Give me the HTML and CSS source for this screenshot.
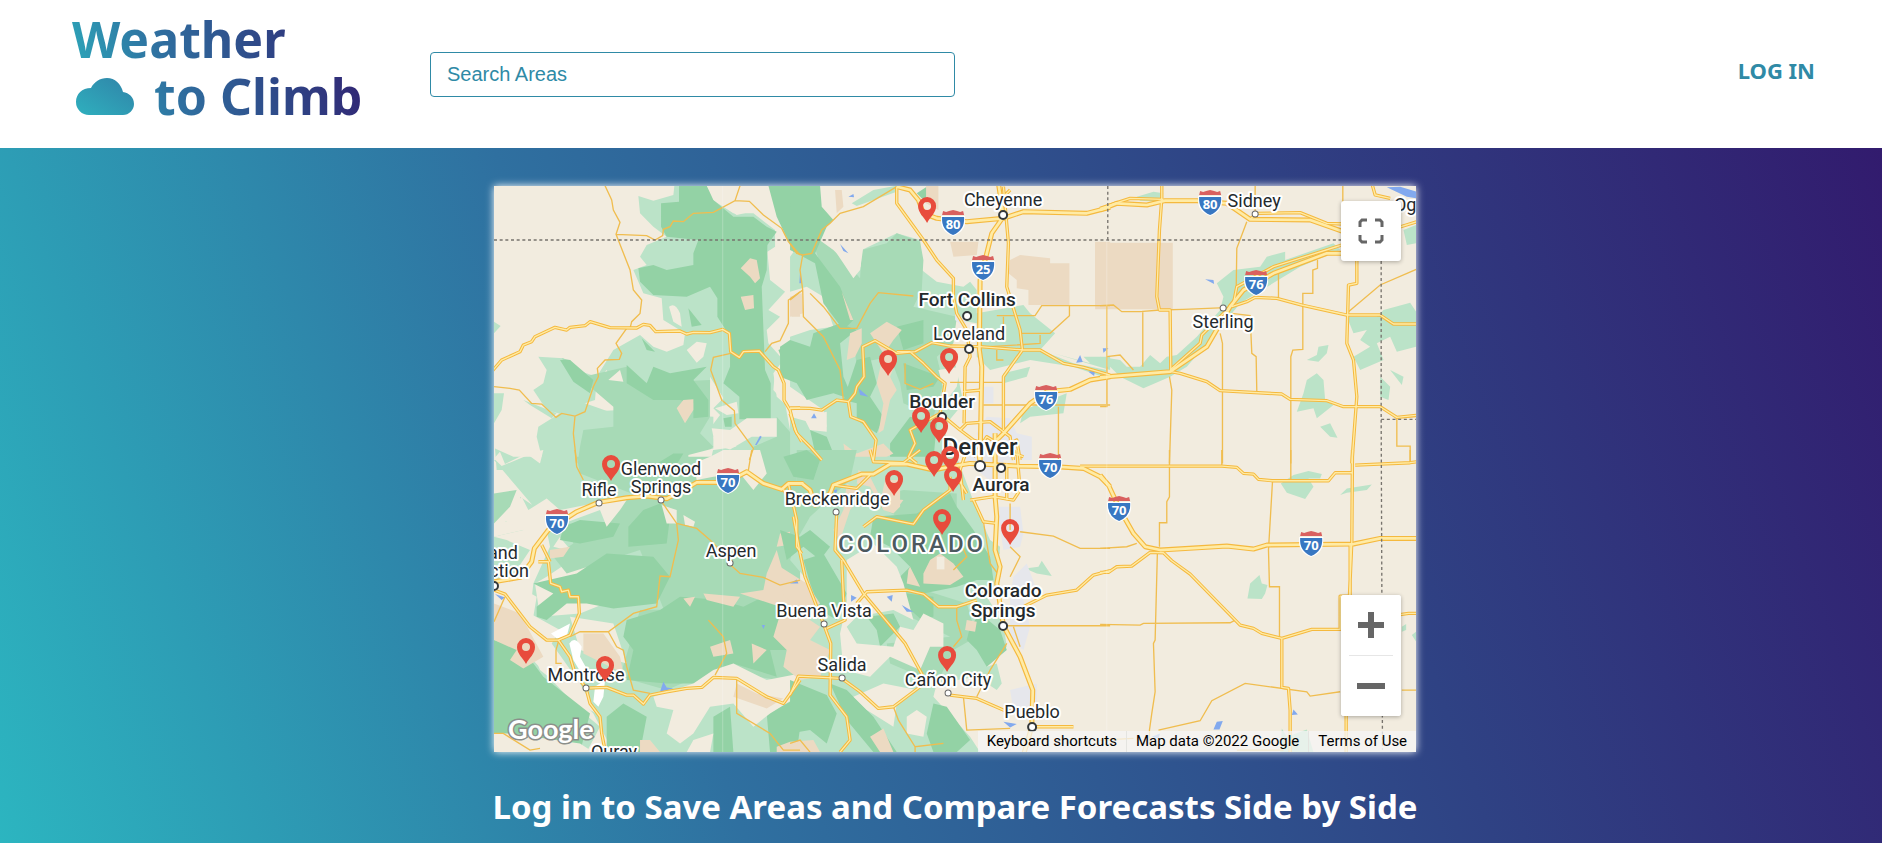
FILE: index.html
```html
<!DOCTYPE html>
<html lang="en">
<head>
<meta charset="utf-8">
<meta name="viewport" content="width=device-width, initial-scale=1">
<title>Weather to Climb</title>
<link rel="stylesheet" href="styles.css">
</head>
<body>
<header class="header">
  <a class="logo" href="#">
    <span class="logo-line">Weather</span>
    <span class="logo-row">
      <svg class="cloud" viewBox="0 0 58 37" aria-hidden="true">
        <defs><linearGradient id="cloudFill" x1="0" y1="1" x2="1" y2="0"><stop offset="0" stop-color="#2fb0be"/><stop offset="1" stop-color="#3083a8"/></linearGradient></defs>
        <path fill="url(#cloudFill)" d="M13 37A13 13 0 0 1 0 24C0 16 6 10 15 10C18 4 24 0 31 0C39 0 45 6 47 14C53 15 58 19 58 26C58 32 53 37 47 37Z"/>
      </svg>
      <span class="logo-line">to Climb</span>
    </span>
  </a>
  <input class="search" type="search" placeholder="Search Areas" aria-label="Search Areas">
  <a class="login" href="#">LOG IN</a>
</header>
<main class="main">
  <section class="map" aria-label="Map of climbing areas">
    <svg class="map-canvas" viewBox="0 0 922 566" preserveAspectRatio="xMidYMid slice">
      <defs>
        <g id="highways">
          <path transform="translate(-42 792)" d="M42,395L120,382L155,335L163,295L205,240L290,185L355,157L440,143L500,138L560,146L620,115L650,97L740,97L800,65L850,100L905,118L925,100L970,100"/>
          <path transform="translate(888 792)" d="M0,100L35,100L60,120L75,165L120,130L130,105L215,72L250,72L300,42L350,42L430,60L480,50L540,40L680,48L800,50L880,55L930,80L960,110M615,-50L615,140L620,200L615,300L630,350L620,400L640,527L690,620L728,720L725,830L700,915"/>
          <path transform="translate(1818 792)" d="M0,75L25,105L60,180L100,250L135,290L180,300L380,288L460,297L500,285L760,282L840,265L960,265"/>
          <path transform="translate(888 -48)" d="M320,50L360,60L385,90L400,130L440,145L530,155L640,145L700,125L890,130L960,112M625,40L640,140L605,190L590,250L570,330L568,540L575,590L570,880M620,810L640,790L720,700L770,665L840,658L900,630L960,620"/>
          <path transform="translate(1818 -48)" d="M0,120L50,100L140,105L195,92L290,92L380,100L450,148L630,150L730,185M0,622L210,605L320,530L390,410L430,360L520,310L680,250L735,250"/>
        </g>
        <g id="roads">
          <path transform="translate(-42 -48)" d="M35,605L65,570L120,545L130,525L155,515L165,500L225,472L260,480L270,472L315,467L330,455L390,473L470,474L490,463L510,466L527,485L600,483L620,492L640,487L690,488L728,478L748,490L752,545L778,562L790,545L838,543L880,590L895,600L912,640L912,690L930,720L945,780L965,815M930,716L960,714"/>
          <path transform="translate(888 -48)" d="M0,714L60,715L95,720L140,690L175,695L195,670L200,650L222,620L218,530L255,512L320,550L375,545L425,518L480,528L570,530L700,540L750,540L820,580L880,592L960,615M320,50L320,100L400,210L440,270L490,325L490,380L500,430L530,480L540,560L525,590L522,760M640,50L655,220L650,350L690,480L697,540L640,620L640,780M660,60L640,80M320,545L360,545L400,580L440,620L465,640L450,730L510,780L530,760L600,755L660,800L670,870M175,695L182,740L220,755L258,810L250,870M0,730L20,790L60,830L95,870M510,780L550,810L700,860M520,665L575,660M450,730L360,780L375,820L355,860L380,880M550,860L590,800L640,830L680,810L690,870"/>
          <path transform="translate(1818 -48)" d="M185,40L185,85L178,180L170,380L178,420L210,420L212,605M0,115L60,95L90,85L190,88M450,148L470,130L600,128L680,160L730,162M212,605L240,610L320,635L360,662L545,672L570,688L680,692L730,710L840,710L890,742L960,735M395,410L440,395L465,382L530,385L605,405L740,435L840,435L880,462L960,462M770,270L770,340L745,345L740,520L760,570L770,680L755,880M815,40L825,75L870,85M870,180L960,152M210,600L300,520L305,495L400,400L410,350L520,290L725,225"/>
          <path transform="translate(-42 792)" d="M42,420L75,432L150,530L200,570L235,570L270,620L285,670L318,714L330,760L360,800L365,850L375,900M175,335L205,335L212,400L240,410L245,425L265,420L270,440L295,440L298,490L270,555L235,570M185,285L210,335M318,714L380,712L440,735L460,735L490,762L510,735L560,725L620,715L665,712L700,682L770,685L860,740L910,760L960,690M925,100L950,210L950,290L965,310M910,118L935,160"/>
          <path transform="translate(888 792)" d="M10,200L30,310L45,380L100,520L122,580L120,735L170,800L180,870L150,906M140,185L135,300L160,330L220,430L345,580L400,680L390,710L310,770L265,775L210,725L155,685L25,678L0,735M130,105L200,115L240,75M155,330L160,440L165,510L110,535M200,460L230,425L350,420L400,432L445,470L500,470L560,450M220,230L260,200L370,222L400,180L480,120L480,80M480,735L560,745L640,780L725,790M540,150L610,140L670,150L690,120L680,0M530,0L510,60L520,150M550,150L580,215L620,220M725,830L850,830M680,480L700,470L770,435L860,420L910,375L960,362M500,80L530,130M240,0L250,35L340,38L390,0M560,0L570,40M650,40L650,150"/>
          <path transform="translate(1818 792)" d="M-60,48L365,48L410,52L430,70L460,72L475,88L515,92L685,92L705,68L755,68M757,0L755,275L748,435M765,45L930,38L960,34M0,367L25,367L50,350L95,348L150,307L190,308L215,332L270,372L420,525L460,535L485,550L545,565L635,538L720,538L720,438L750,438L750,280M545,565L545,712L565,715L570,780L570,906M738,798L738,906M890,495L925,490L960,490"/>
        </g>
        <path id="pin" fill="#e84b3c" fill-rule="evenodd" d="M0 0C-3-6-9-10-9-17A9 9 0 0 1 9-17C9-10 3-6 0 0ZM0-21A4 4 0 1 0 0-13A4 4 0 1 0 0-21Z"/>
        <g id="shield"><path fill="#fff" d="M-12-7H12V0Q11 9 0 13Q-11 9-12 0Z"/><path fill="#d9605f" d="M-10-12L-7-11L-4-12L0-13L4-12L7-11L10-12L11-8H-11Z"/><path fill="#3877c2" d="M-11-6H11Q12 7 0 12Q-12 7-11-6Z"/></g>
      </defs>

      <g transform="scale(.333333)">
        <g transform="translate(-42 -48)">
          <path class="light" d="M475,78L520,92L580,75L583,47L680,47L690,85L760,130L820,130L885,180L885,230L862,245L870,330L915,365L865,420L900,440L860,480L865,520L910,570L880,610L890,680L930,715L960,800L960,880L620,880L640,850L700,840L770,830L700,800L690,775L720,735L700,715L730,685L720,640L690,590L690,640L480,650L420,640L395,640L380,600L350,630L345,690L315,700L400,730L365,755L310,725L270,740L200,720L160,660L190,640L200,600L175,560L250,565L290,600L350,620L400,540L480,495L520,530L560,545L610,525L615,490L550,450L545,385L490,370L460,300L500,285L480,260L500,225L560,200L520,170L480,130Z"/>
          <path class="light" d="M620,500L740,480L760,560L740,700L690,620L620,550Z"/>
          <path class="light" d="M175,770L240,730L420,720L700,740L700,835L620,900L50,900L45,835L100,860L185,860L170,800ZM42,670L72,670L65,720L42,760ZM42,455L62,468L42,490ZM130,690L230,730L215,745L150,705Z"/>
          <path class="mid" d="M300,830L310,780L400,770L400,710L330,650L280,610L245,565L270,570L310,620L440,590L470,640L690,630L690,740L660,790L700,830L620,900L290,900ZM820,830L890,800L890,740L960,820L960,880L820,880Z"/>
          <path class="dark" d="M543,100L597,95L597,47L680,47L700,90L760,140L820,140L860,170L890,185L862,225L860,300L845,350L855,600L872,640L872,748L778,748L778,680L730,640L750,590L750,500L712,440L712,385L690,350L620,380L520,375L480,335L475,295L520,285L560,300L640,285L640,250L655,210L560,200L543,170ZM865,47L960,47L960,250L940,245L890,140ZM485,505L525,545L500,540ZM440,585L500,640L520,590L570,610L680,590L640,630L685,690L685,740L640,745L640,700L600,690L520,690L440,640ZM625,415L665,465L635,470ZM895,540L960,510L960,585L910,580ZM730,745L755,740L755,770L735,770ZM240,570L270,570L340,630L330,670L280,635Z"/>
          <path class="base" d="M680,47H785L800,90L835,120L770,135L710,95ZM620,540L650,515L680,520L670,560L650,578ZM567,410Q585,395 600,430L605,470L580,455ZM705,715L770,695L775,730L740,735ZM695,775L750,780L800,745L890,745L890,800L815,800L750,838L705,825ZM420,600L430,635L385,630ZM880,470L905,440L935,490L900,495ZM625,855L700,835L690,880L625,880ZM885,600L930,630L955,700L930,780L915,700L880,660Z"/>
          <path class="tan" d="M782,295L810,265L830,270L840,325L825,340L810,320ZM782,380L820,375L822,415L795,420ZM590,715L610,690L640,688L640,720L615,760ZM935,395L960,380L960,440L935,440Z"/>
          <path class="water" d="M825,825L840,797L845,800L830,825Z"/>
        </g>
        <g transform="translate(888 -48)">
          <path class="light" d="M185,100L250,60L320,47L320,65L200,108ZM0,260L60,180L95,220L180,290L215,290L215,240L320,190L390,210L395,300L440,335L520,350L540,335L560,360L560,430L700,405L720,430L795,490L750,540L850,580L950,600L950,625L850,590L720,570L600,600L560,560L560,460L500,450L480,520L500,600L520,700L470,760L460,880L0,880L0,740L110,770L100,720L0,650L0,500L60,480L130,470L100,380L50,350L0,365ZM640,610L720,590L710,620L640,640ZM700,720L830,670L820,730L720,740L690,760ZM790,550L900,580L880,560L960,560L960,600Z"/>
          <path class="mid" d="M60,190L130,240L180,290L210,325L215,240L290,220L320,190L390,215L400,270L395,360L370,410L500,440L490,520L440,560L460,640L430,740L340,700L330,640L300,560L200,580L180,480L130,400Z"/>
          <path class="dark" d="M0,47L90,47L95,110L130,150L110,170L75,250L150,350L190,450L160,480L100,400L75,280L20,250L0,240ZM380,70L410,50L410,100ZM70,490L150,460L200,480L150,520L160,620L190,690L130,670L50,690L20,640L-30,620L-30,530L0,510L60,530ZM340,580L450,620L430,650L350,660ZM200,570L240,560L260,640L240,680L280,740L260,790L200,750L200,700L160,690ZM320,470L400,450L400,520L340,540ZM360,740L440,760L430,870L300,870L300,820ZM60,780L110,800L130,850L80,870Z"/>
          <path class="base" d="M130,210L180,240L220,230L210,300L190,325L160,280L140,250ZM445,600L510,590L500,650L470,690ZM40,740L110,725L110,785L60,780Z"/>
          <path class="tan" d="M135,60L155,60L160,110L140,130ZM408,47L445,47L445,120L408,100ZM480,215L565,215L560,255L490,260ZM660,270L690,255L780,265L780,280L838,280L838,405L715,405L715,360L680,355L680,330L655,310ZM915,215L960,215L960,405L915,405ZM180,490L215,475L215,520L195,560L170,570ZM240,490L290,455L335,480L310,510L290,540L320,570L300,620L320,660L300,690L280,780L265,790L280,700L260,640L280,550ZM155,365L190,450L180,450ZM0,380L35,370L40,430L0,440ZM160,820L200,850L280,820L310,850L250,880L170,880ZM590,800L610,810L600,830Z"/>
          <path class="urban" d="M495,430L530,450L520,470L495,450ZM580,650L610,650L610,700L580,700ZM590,740L660,745L680,790L725,800L725,870L590,870L560,790Z"/>
          <path class="water" d="M150,222L175,250L160,243ZM175,80L190,72L192,82ZM30,305L35,340L28,340ZM205,655L235,680L210,675ZM63,745L72,730L80,745ZM858,578L870,555L878,576ZM895,605L915,600L912,618ZM938,535L955,535L940,548Z"/>
        </g>
        <g transform="translate(1818 -48)">
          <path class="light" d="M0,560L60,570L80,590L120,590L150,555L180,580L200,560L230,555L290,500L360,420L370,380L350,340L400,300L480,290L500,260L555,245L555,270L700,220L720,240L600,290L420,400L330,510L260,590L210,620L130,655L60,620ZM110,80L160,65L190,70L170,95L120,92ZM620,570L650,555L655,530L685,525L680,550L655,575ZM590,725L610,670L620,630L650,610L670,630L675,690L700,705L650,745L640,715ZM660,770L690,760L712,803L690,800ZM740,440L830,440L850,420L930,398L948,425L948,530L890,545L870,500L830,520L850,570L780,600L760,560L810,530L780,510L800,480L760,490ZM870,600L910,620L905,645ZM840,620L870,650L865,690L840,680ZM910,180L948,165L948,220L920,225Z"/>
          <path class="tan" d="M-15,218H218V418H-15Z"/>
          <path class="water" d="M860,52L900,50L948,65V85L920,80ZM315,328L340,330L342,342Z"/>
        </g>
        <g transform="translate(-42 792)">
          <path class="light" d="M42,30L70,30L130,30H960V906H400L340,790L240,680L200,560L160,500L170,440L80,390L42,390V260L130,240L120,210L75,215L130,180L120,140L180,180L220,150L290,190L260,230L220,290L260,300L300,270L320,300L200,380L165,400L180,500L300,490L400,450ZM42,560L130,600L300,780L360,830L320,906H42Z"/>
          <path class="mid" d="M290,20H960V500H560L480,300L260,370L220,320L280,280L260,220L380,230L400,150L480,140L300,70ZM42,130L110,120L90,170L42,220ZM480,480L960,470V700L700,660L560,720L420,680Z"/>
          <path class="dark" d="M160,400L290,370L380,310L520,320L570,380L530,460L400,475L320,460L260,460L200,510L170,500V470L220,430ZM250,230L300,210L420,220L400,260L300,280L240,270ZM445,230L490,180L540,160L570,200L560,280L445,290ZM440,510L540,480L600,440L720,450L790,470L850,440L960,480V600L870,600L890,680L760,640L660,700L560,700L440,690L460,600L430,560ZM42,570L130,600L190,680L240,720L330,790L300,906L42,860ZM500,60L580,10H610L580,60ZM380,800L430,760L500,800L480,906H380ZM700,800L750,770L760,906H700ZM860,790L960,740V906H870Z"/>
          <path class="base" d="M60,5L75,42L130,15L165,5L190,0L180,40L145,15L65,48L42,25ZM70,210L125,140L145,180L200,145L240,180L340,160L440,150L420,180L380,230L360,180L250,220L200,240L210,290L160,400L150,490L240,540L215,580L300,700L350,790L330,780L180,660L140,560L42,480V400L90,390L150,300L80,270L42,260L130,240ZM545,165L590,180L590,220L560,220ZM610,195L645,215L640,230L615,225ZM520,740L640,700L700,660L760,640L860,690L960,670V735L870,790L820,830L760,760L690,770L640,850L600,880L560,850L580,780L530,770ZM42,850L100,850L160,860L300,880L340,906H42ZM640,870L700,850L690,906H620ZM640,40L690,20L730,0H840L860,70L820,120L780,70L700,80L650,90ZM270,500L400,520L440,640L300,600Z"/>
          <path class="tan" d="M42,460L120,490L190,620L130,655L90,630L110,600L42,570ZM310,550L370,550L420,620L430,670L390,650L310,610ZM670,430L780,440L760,470L680,450ZM780,430L850,420L860,370L890,300L915,390L960,400V500L900,470ZM690,590L750,570L760,610L700,620ZM815,580L860,600L820,640ZM610,445L645,440L630,470ZM210,300L270,290L250,320L210,325ZM900,250L930,245L925,285L890,290ZM480,870L510,870L540,906H480ZM770,700L830,730L910,745L860,775L760,740Z"/>
          <path class="snow" d="M213,550L270,520L260,560L230,565ZM268,580Q285,555 305,590L300,620L325,665L310,680L280,630ZM345,710L375,690L370,740L355,770L340,755Z"/>
          <path class="water" d="M540,725L550,695L560,712L580,715ZM845,525L855,525L850,537ZM935,397L955,388L955,402ZM45,432L75,442L65,450Z"/>
        </g>
        <g transform="translate(888 792)">
          <path class="light" d="M20,20H500L560,180L600,270L630,290L620,400L590,440L640,520L650,590L590,650L620,640L635,700L620,720L560,680L440,700L430,740L540,860L570,906H20L40,760L20,680L50,600L20,500L60,400L0,330L40,200L20,100ZM705,355L745,350L755,332L785,378L740,370ZM580,290L620,275L630,310L600,320Z"/>
          <path class="mid" d="M20,0H200L180,90L60,200L20,270ZM340,400L530,460L560,560L490,600L440,700L300,640L290,580L480,560L360,500ZM230,150L340,120L500,130V190L380,230Z"/>
          <path class="dark" d="M-20,20L50,0L90,30L70,90L10,80ZM250,200L380,190L480,130L500,170L550,240L600,320L610,390L560,390L500,410L400,430L340,420L320,390L360,350L300,290L240,260ZM-30,240L30,260L60,240L120,290L90,330L40,290L-10,330ZM40,330L100,310L170,430L140,510L90,480L60,400ZM350,430L430,440L430,500L390,505L340,460ZM540,530L570,490L630,540L650,600L590,650L560,600L530,570ZM230,500L310,490L330,530L270,590L260,540ZM0,690L110,735L140,790L110,880L60,840L0,850ZM120,700L170,720L250,800L320,906H250L170,810ZM430,760L470,770L540,870L500,906H430L410,850Z"/>
          <path class="base" d="M170,330L250,280L320,350L340,400L370,510L310,480L200,500L170,530L200,580L310,590L330,530L370,540L400,490L460,520L460,590L420,590L390,660L300,620L240,680L160,660L150,550L170,460ZM190,740L280,700L380,720L320,760L310,830L230,780ZM380,780L410,800L400,860L350,850V800Z"/>
          <path class="tan" d="M205,60L240,80L270,140L340,150L310,190L280,180L240,110L200,100ZM170,100L220,130L180,180L150,270L130,240L160,180ZM285,90L330,90L330,170L310,190L270,160ZM420,330L450,310L490,340L520,380L480,405L400,400L400,370ZM370,330L360,350L390,410L350,400L355,360ZM530,510L560,515L555,545L525,540ZM-20,460L30,490L90,530L60,570L120,600L90,680L30,690L-20,650L-10,600L-50,560ZM-30,350L50,400L90,460L60,480L-20,440ZM240,860L280,835L310,906H270ZM-40,890L0,875L70,870L90,906H-40Z"/>
          <path class="base" d="M440,320H463V358H440Z"/>
          <path class="urban" d="M500,0H640V60L610,100L560,60ZM620,170L690,170L700,250L690,290L640,300ZM670,380L710,340L740,420L700,450L720,530L700,600L660,570L660,440ZM660,720L740,700L740,800L670,780Z"/>
          <path class="water" d="M290,440L308,435L305,455ZM335,465L370,485L350,485ZM183,435L200,443L183,455ZM640,815L680,822L660,832ZM0,400L20,388L25,400ZM127,120L142,118L138,130Z"/>
        </g>
        <g transform="translate(1818 792)">
          <path class="light" d="M542,100L580,75L625,63L665,72L660,85L625,85L640,110L615,147L560,128ZM720,135L740,115L815,103L800,120L740,128ZM442,445L450,400L478,375L485,400L502,405L495,430L485,447ZM545,835L560,860L620,838L640,906H540ZM905,530L918,522L918,540L905,545ZM935,555L948,545V575Z"/>
          <path class="water" d="M340,838L350,815L368,813L358,838ZM575,795L580,778L593,793ZM155,860L180,850L175,865Z"/>
        </g>

        <g class="minor">
          <path transform="translate(-42 -48)" d="M375,47L395,90L400,120L420,157L408,193L450,300L460,360L485,390L480,430L455,455L450,475M408,193L500,197L525,210L548,197L550,178L570,170L580,153L610,155L640,130L700,127L765,92L808,94L850,135L905,175L925,215L960,255M780,47L765,92M440,475L408,520L425,550L418,568L375,570L352,595L355,620L340,650L315,725L285,738L245,730L228,742L185,702L155,700L118,660L90,655L42,650M285,738L280,790L290,880M752,550L700,562L692,600L725,690L763,722L765,760L820,835L808,870M855,545L875,520L900,512L925,460L925,390L960,365"/>
          <path transform="translate(888 -48)" d="M320,50L220,110L150,130L120,160L95,180L65,250L38,255L20,250L0,220M38,255L30,300L38,360L0,390M38,360L40,440L100,500L150,600L160,690M60,370L100,410L150,475L200,475L240,400L265,368L370,378M620,437L735,437L755,407L960,407M838,407V437L780,490H690M480,637H640M580,705H960M805,710V870M600,530L750,520V495M640,490V440M620,540V570H640M345,580L345,640L390,658L430,640M950,407V710"/>
          <path transform="translate(1818 -48)" d="M440,155L410,235L408,370M465,47V130M728,47V155M0,407L40,405L65,425L120,425L180,420L250,418L395,412M128,422V590M208,620L215,660L208,880M360,490L367,520V880M395,430L450,437L455,550L468,560L470,665M652,270L652,295L638,300V370H608V538L578,540L572,560V880M535,310V385M745,425L840,345L948,298M0,710H20V590M890,745V828H930V880M20,560L60,555L100,600"/>
          <path transform="translate(-42 792)" d="M285,0L290,50L310,90M545,155L590,220L595,270L570,380L540,378L530,470L460,490L385,545L300,545L270,560M590,220L650,235L690,270L735,315M752,345L780,370L850,382L900,405L960,390M385,545L410,590L430,600L440,650L460,720L510,730M685,510L730,560L740,610L705,675M770,690L770,790L870,850L910,900H960M42,515L75,440M235,575L228,600V640L245,640M42,850L70,850L150,900L180,895M815,0L805,60"/>
          <path transform="translate(888 792)" d="M690,245L790,258L870,295H960M640,527H960M650,580L600,660L560,740M500,470L500,510L515,560L490,590M660,160V240M660,290L690,320L660,380M310,770L325,810L375,890L460,880M520,740L530,840L660,835M375,906V890M670,530L690,590M0,880L30,870L60,906M490,360L530,320L500,250M580,215L600,340L630,380"/>
          <path transform="translate(1818 792)" d="M208,0V140L200,155V218H178V290M172,300L165,570L160,580L165,725L155,790L148,840V880M0,523L120,525L130,520L390,518L405,510M517,95L505,300L508,410H538V560M0,295L80,290L110,280M175,840L300,812L335,752L435,700L620,725L630,738L720,725M905,720H948M572,0V90M365,0V45M930,0V35M0,870L100,865M410,900H550"/>
        </g>
        <use href="#roads" class="case case-road"/>
        <use href="#highways" class="case case-highway"/>
        <use href="#roads" class="core core-road"/>
        <use href="#highways" class="core core-highway"/>
        <path class="border" d="M0,162H2550M1841,0V162M2661,225V700L2665,1690M2661,700H2766"/>
        <path class="seam" d="M686,0V1698M1838,160V1698"/>
      </g>

      <g class="dots">
        <circle cx="509" cy="29" r="4"/><circle cx="473" cy="130" r="4"/><circle cx="475" cy="163" r="4"/><circle cx="448" cy="231" r="4"/><circle cx="486" cy="280" r="5"/><circle cx="507" cy="282" r="4"/><circle cx="509" cy="440" r="4"/><circle cx="538" cy="541" r="4"/><circle cx="0" cy="400" r="4"/>
      </g>
      <g class="dots dots-small">
        <circle cx="761" cy="28" r="3"/><circle cx="729" cy="122" r="3"/><circle cx="105" cy="317" r="3"/><circle cx="167" cy="314" r="3"/><circle cx="236" cy="377" r="3"/><circle cx="92" cy="502" r="3"/><circle cx="342" cy="326" r="3"/><circle cx="330" cy="438" r="3"/><circle cx="348" cy="492" r="3"/><circle cx="454" cy="507" r="3"/>
      </g>
      <g class="routes">
        <use href="#shield" x="459" y="37"/><text x="459" y="43">80</text>
        <use href="#shield" x="489" y="82"/><text x="489" y="88">25</text>
        <use href="#shield" x="552" y="212"/><text x="552" y="218">76</text>
        <use href="#shield" x="716" y="17"/><text x="716" y="23">80</text>
        <use href="#shield" x="762" y="97"/><text x="762" y="103">76</text>
        <use href="#shield" x="556" y="280"/><text x="556" y="286">70</text>
        <use href="#shield" x="625" y="323"/><text x="625" y="329">70</text>
        <use href="#shield" x="817" y="358"/><text x="817" y="364">70</text>
        <use href="#shield" x="234" y="295"/><text x="234" y="301">70</text>
        <use href="#shield" x="63" y="336"/><text x="63" y="342">70</text>
      </g>
      <g class="labels">
        <text x="509" y="20">Cheyenne</text><text x="475" y="154">Loveland</text>
        <text x="760" y="21">Sidney</text><text x="729" y="142">Sterling</text><text x="911" y="25">Og</text>
        <text x="105" y="310">Rifle</text><text x="167" y="289">Glenwood</text><text x="167" y="307">Springs</text>
        <text x="237" y="371">Aspen</text><text x="9" y="373">and</text><text x="15" y="391">ction</text>
        <text x="92" y="495">Montrose</text><text x="120" y="572">Ouray</text>
        <text x="343" y="319">Breckenridge</text><text x="330" y="431">Buena Vista</text>
        <text x="348" y="485">Salida</text><text x="454" y="500">Cañon City</text><text x="538" y="532">Pueblo</text>
        <g class="city"><text x="473" y="120">Fort Collins</text><text x="448" y="222">Boulder</text><text x="507" y="305">Aurora</text><text x="509" y="411">Colorado</text><text x="509" y="431">Springs</text></g>
        <text class="capital" x="486" y="269">Denver</text>
        <text class="state" x="418" y="366">COLORADO</text>
      </g>
      <g class="pins">
        <use href="#pin" x="433" y="37"/><use href="#pin" x="394" y="190"/><use href="#pin" x="455" y="188"/><use href="#pin" x="427" y="247"/><use href="#pin" x="445" y="257"/><use href="#pin" x="456" y="286"/><use href="#pin" x="440" y="291"/><use href="#pin" x="459" y="306"/><use href="#pin" x="400" y="310"/><use href="#pin" x="448" y="349"/><use href="#pin" x="516" y="359"/><use href="#pin" x="453" y="486"/><use href="#pin" x="117" y="295"/><use href="#pin" x="32" y="478"/><use href="#pin" x="111" y="496"/>
      </g>
      <text class="brand" x="14" y="553">Google</text>
    </svg>
    <div class="controls">
      <button class="control" type="button" aria-label="Toggle fullscreen view">
        <svg width="26" height="26" viewBox="0 0 26 26" fill="none" stroke="#666" stroke-width="3"><path d="M2 9V4L4 2H9M17 2H22L24 4V9M24 17V22L22 24H17M9 24H4L2 22V17"/></svg>
      </button>
      <div class="zoom">
        <button class="control" type="button" aria-label="Zoom in"><svg width="26" height="26" viewBox="0 0 26 26" fill="#666"><path d="M10 0H16V10H26V16H16V26H10V16H0V10H10Z"/></svg></button>
        <hr class="zoom-rule">
        <button class="control" type="button" aria-label="Zoom out"><svg width="28" height="6" viewBox="0 0 28 6" fill="#666"><path d="M0 0H28V6H0Z"/></svg></button>
      </div>
    </div>
    <div class="credits">
      <button class="credit" type="button">Keyboard shortcuts</button>
      <span class="credit">Map data ©2022 Google</span>
      <a class="credit" href="#">Terms of Use</a>
    </div>
  </section>
  <h1 class="tagline">Log in to Save Areas and Compare Forecasts Side by Side</h1>
</main>
</body>
</html>
```
FILE: styles.css
```css
* { box-sizing: border-box; }
body {
  margin: 0;
  min-height: 100vh;
  display: flex;
  flex-direction: column;
  font-family: "Noto Sans", "Open Sans", sans-serif;
}
.header {
  display: flex;
  align-items: center;
  height: 148px;
  padding: 0 67px 0 72px;
  background: #fff;
}
.logo {
  display: flex;
  flex-direction: column;
  width: 358px;
  padding-bottom: 12px;
  text-decoration: none;
  font-size: 50px;
  line-height: 57px;
  font-weight: 700;
  background: linear-gradient(70deg, #2cb5c0, #2f70a0 35%, #2f4284 70%, #321b6e) 0 0 / 294px 100% no-repeat;
  background-clip: text;
  -webkit-background-clip: text;
  color: transparent;
}
.logo-row { display: flex; align-items: center; gap: 20px; }
.cloud { width: 58px; height: 37px; margin-left: 4px; }
.search {
  width: 525px;
  height: 45px;
  padding: 0 16px;
  border: 1px solid #2f8aa6;
  border-radius: 4px;
  background: #fff;
  font: 20px "Liberation Sans", Arial, sans-serif;
  color: #2f8aa6;
  appearance: none;
}
.search::placeholder { color: #2f8aa6; opacity: 1; }
.login {
  margin-left: auto;
  padding-bottom: 8px;
  color: #2f8aa6;
  font-size: 22px;
  font-weight: 700;
  text-decoration: none;
}
.main {
  flex: 1;
  display: flex;
  flex-direction: column;
  align-items: center;
  padding-top: 38px;
  padding-left: 28px;
  background: linear-gradient(70deg, #2cb5c0, #2f70a0 35%, #2f4284 70%, #321b6e);
}
.map {
  position: relative;
  width: 49vw;
  aspect-ratio: 922 / 566;
  background: #f2ecdf;
  box-shadow: 0 0 8px #fff;
}
.map-canvas { display: block; width: 100%; height: 100%; overflow: hidden; font-family: Roboto, sans-serif; }
.light { fill: #bbe3c8; }
.mid { fill: #a7dab6; }
.dark { fill: #93d2a5; }
.tan { fill: #ecdac2; }
.base { fill: #f2ecdf; }
.urban { fill: #e6e7ec; }
.snow { fill: #fff; }
.water { fill: #82a9ee; }
.minor { fill: none; stroke: #f0bd4f; stroke-width: 4; }
.case, .core { fill: none; stroke-linejoin: round; }
.case { stroke: #f5b93e; }
.core { stroke: #ffeba5; }
.case-road { stroke-width: 10; }
.core-road { stroke-width: 4; }
.case-highway { stroke-width: 15; }
.core-highway { stroke-width: 8; }
.border { fill: none; stroke: #77736d; stroke-width: 4; stroke-dasharray: 9 8; }
.seam { stroke: #fff; stroke-width: 2; opacity: .35; }
.dots { fill: #fff; stroke: #33373a; stroke-width: 2; }
.dots-small { stroke: #666; stroke-width: 1; }
.routes { fill: #fff; font: 700 13px "Open Sans", sans-serif; text-anchor: middle; }
.labels {
  fill: #24292c;
  stroke: #fff;
  stroke-width: 4px;
  stroke-linejoin: round;
  paint-order: stroke;
  font-size: 18px;
  text-anchor: middle;
}
.city { font-size: 19px; font-weight: 500; }
.capital { font-size: 24px; font-weight: 500; }
.state { font-size: 24px; font-weight: 500; letter-spacing: 3px; fill: #4c595f; }
.brand {
  font: 700 27px Lato, sans-serif;
  fill: #fff;
  stroke: #8b8f8b;
  stroke-width: 3px;
  paint-order: stroke;
}
.controls {
  position: absolute;
  inset: 15px 15px 36px auto;
  display: flex;
  flex-direction: column;
  justify-content: space-between;
}
.control {
  display: flex;
  align-items: center;
  justify-content: center;
  width: 60px;
  height: 60px;
  padding: 0;
  border: 0;
  border-radius: 3px;
  background: #fff;
}
.controls > * { box-shadow: 0 1px 4px rgba(0, 0, 0, .3); }
.zoom { border-radius: 3px; background: #fff; }
.zoom-rule { height: 1px; margin: 0 8px; border: 0; background: #e6e6e6; }
.credits {
  position: absolute;
  right: 0;
  bottom: 0;
  display: flex;
  height: 21px;
  background: rgba(245, 245, 245, .75);
}
.credit {
  padding: 0 9px;
  border: 0;
  background: none;
  color: #000;
  font: 15px/21px Roboto, sans-serif;
  text-decoration: none;
  white-space: nowrap;
}
.credit + .credit { border-left: 1px solid #e4e4e0; }
.tagline {
  margin: 31px 0 0;
  color: #fff;
  font-size: 33px;
  line-height: 48px;
  font-weight: 700;
  text-align: center;
}
```
